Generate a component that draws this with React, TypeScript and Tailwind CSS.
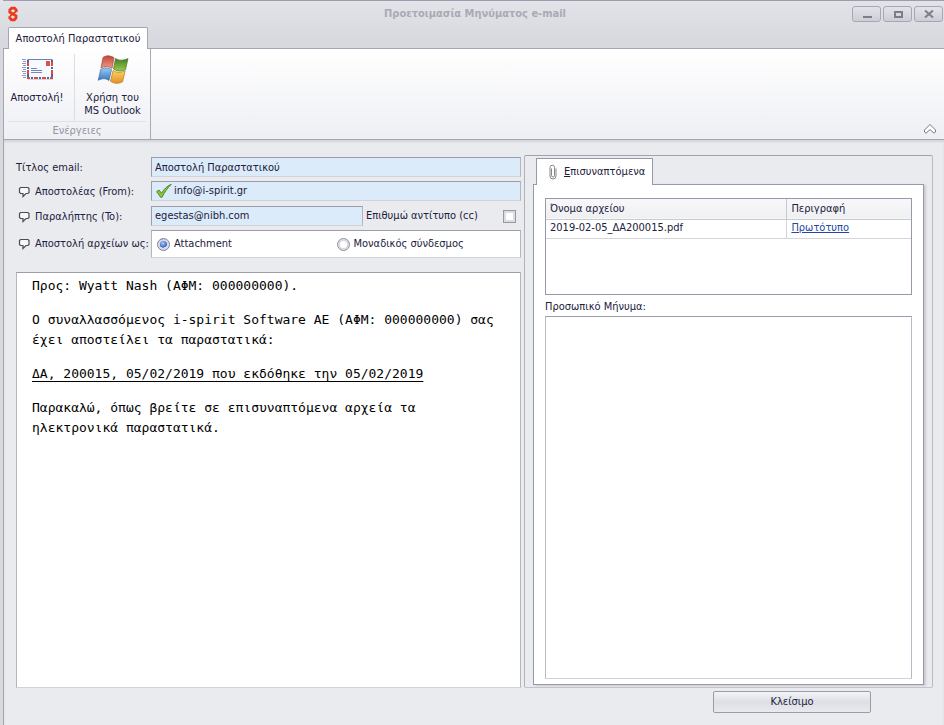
import { useState } from "react";
import type { ReactNode } from "react";

const ATTACHMENTS = [{ name: "2019-02-05_ΔΑ200015.pdf", description: "Πρωτότυπο" }];

const FIELD =
  "w-full min-w-0 border border-t-[#9c9cab] border-l-[#9c9cab] border-b-[#d2d3d9] border-r-[#b4b5bf] bg-[#dcebf9]";

function Logo() {
  return (
    <svg className="h-4 w-3" viewBox="0 0 12 16" fill="none" stroke="#ec3a1c">
      <path d="M9.2 6V4L7.6 2.2H4.6L2.8 4V6.2L9 9.8V12L7.4 13.8H4.4L2.8 12V10.2" strokeWidth="2.8" />
      <path d="M9 5.5L3 10" strokeWidth="1.6" />
    </svg>
  );
}

function EnvelopeIcon() {
  return (
    <svg className="h-6 w-8" viewBox="0 0 32 24">
      <path d="M6 22.5h25" stroke="#d3d6de" />
      <path d="M0 2.500h4M1 4.500h3M0 6.500h4M1 8.500h3M0 10.500h4M1 12.500h3M0 14.500h4M1 16.500h3M0 18.500h4M1 20.500h3" stroke="#8b9dc6" />
      <rect x="5" y="2" width="26" height="20" rx="1" fill="#f6f9ff" />
      <path d="M5.500 2.500h25" stroke="#6f82ae" />
      <path d="M5 21h26M30 3v18M6 3v18" stroke="#4467a8" strokeWidth="2" />
      <path d="M5 21h3M12 21h4M20 21h4M28 21h3M30 5v4M30 13v4M6 5v4M6 13v4" stroke="#dd4a3b" strokeWidth="2" />
      <path d="M8 21h1M11 21h1M16 21h1M19 21h1M24 21h1M27 21h1M30 9v1M30 12v1M6 9v1M6 12v1" stroke="#f6f9ff" strokeWidth="2" />
      <rect x="24" y="4" width="4" height="5" fill="#dd5044" />
      <path d="M9 11.500h6M9 13.500h11M9 15.500h11" stroke="#7387b8" />
    </svg>
  );
}

function WindowsIcon() {
  return (
    <svg className="h-8 w-8" viewBox="0 0 32 32">
      <defs>
        <linearGradient id="red" x1="0" y1="0" x2="0" y2="1">
          <stop offset="0" stopColor="#c4453c" />
          <stop offset="1" stopColor="#ee9c87" />
        </linearGradient>
        <linearGradient id="green" x1="0" y1="0" x2="0" y2="1">
          <stop offset="0" stopColor="#437c22" />
          <stop offset="1" stopColor="#9acb4c" />
        </linearGradient>
        <linearGradient id="blue" x1="0" y1="0" x2="0" y2="1">
          <stop offset="0" stopColor="#9acbf2" />
          <stop offset="1" stopColor="#3a76bc" />
        </linearGradient>
        <linearGradient id="yellow" x1="0" y1="0" x2="0" y2="1">
          <stop offset="0" stopColor="#f9d560" />
          <stop offset="1" stopColor="#e48f25" />
        </linearGradient>
      </defs>
      <path d="M6 3.500C9 1.200 13 1.400 17 3.700L15 14.300C11 12 7.500 12 4 14Z" fill="url(#red)" stroke="#a9443c" strokeWidth=".7" />
      <path d="M18.500 4.400C22 6.700 26 6.700 31 4.600L28.500 15.500C24.500 17.700 20.500 17.500 16.500 15Z" fill="url(#green)" stroke="#47732b" strokeWidth=".7" />
      <path d="M3.700 15.400C7.500 13.400 11 13.400 14.500 15.700L12 26.500C8.500 24 5 24.200 1.200 26.300Z" fill="url(#blue)" stroke="#3e6ea8" strokeWidth=".7" />
      <path d="M16 16.500C20 19 24 18.900 28.200 16.700L25.600 27.700C21.500 30 17.500 29.800 13.500 27.300Z" fill="url(#yellow)" stroke="#b77722" strokeWidth=".7" />
    </svg>
  );
}

function BalloonIcon() {
  return (
    <svg className="h-3 w-3 shrink-0" viewBox="0 0 12 12" fill="#f8f8fa" stroke="#4c4c54" strokeWidth="1.2">
      <path d="M2.500 1.500h7.500l1 1v4l-1 1H8L5 10.500V7.500H2.500l-1-1v-4z" />
    </svg>
  );
}

function CheckIcon() {
  return (
    <svg className="h-4 w-4 shrink-0" viewBox="0 0 16 16">
      <path d="M.7 8.600L3 7l2.600 3.200C8 6 11 3 15.300 1.300C11.500 5 8.500 9.300 6 14.300H4.600Z" fill="#8cc63c" stroke="#4b7d22" strokeWidth=".9" />
    </svg>
  );
}

function ClipIcon() {
  return (
    <svg className="h-4 w-2" viewBox="0 0 8 16" fill="none" stroke="#86868c">
      <path d="M2.500 4.500v7a1.500 1.500 0 0 0 3 0V3.500a2 2 0 0 0-4.500 0V12a3 3 0 0 0 6 0V4.500" />
    </svg>
  );
}

function WindowButton({ label, children }: { label: string; children: ReactNode }) {
  return (
    <button
      type="button"
      aria-label={label}
      className="flex h-4 w-[29px] items-center justify-center rounded-[3px] border border-[#a6a7b3] bg-linear-to-b from-[#e3e4e9] to-[#cdced5]"
    >
      <svg className="h-2 w-[10px]" viewBox="0 0 10 8" fill="none" stroke="#7c7d8c" strokeWidth="2">
        {children}
      </svg>
    </button>
  );
}

function TitleBar() {
  return (
    <header className="flex h-[27px] items-center justify-between border-t border-[#9d9dae] pr-[1px] pl-1">
      <div className="w-[91px]">
        <Logo />
      </div>
      <h1 className="font-bold text-[#a9aab4]">Προετοιμασία Μηνύματος e-mail</h1>
      <div className="flex gap-[2px]">
        <WindowButton label="Ελαχιστοποίηση">
          <path d="M1 7h9" />
        </WindowButton>
        <WindowButton label="Μεγιστοποίηση">
          <rect x="2" y="2" width="7" height="5" />
        </WindowButton>
        <WindowButton label="Έξοδος">
          <path d="M1 .5l8 7M9 .5l-8 7" />
        </WindowButton>
      </div>
    </header>
  );
}

function Ribbon() {
  return (
    <section className="flex h-[92px] justify-between border-t border-b border-l border-[#a4a5b0] bg-linear-to-b from-white to-[#eeeff4]">
      <div className="flex w-[147px] flex-col border-r border-[#a9aab3]">
        <div className="flex flex-1 pt-[5px]">
          <button type="button" className="flex w-[71px] flex-col items-center border-r border-[#dcdde2]">
            <span className="flex h-[37px] pt-[3px] pr-[2px]">
              <EnvelopeIcon />
            </span>
            <span className="pr-1 leading-[13px]">Αποστολή!</span>
          </button>
          <button type="button" className="flex flex-1 flex-col items-center">
            <span className="h-[37px]">
              <WindowsIcon />
            </span>
            <span className="leading-[13px]">
              Χρήση του
              <br />
              MS Outlook
            </span>
          </button>
        </div>
        <div className="mx-1 h-[18px] border-t border-[#e0e1e6] text-center leading-[18px] text-[#9394a0]">Ενέργειες</div>
      </div>
      <button type="button" aria-label="Σύμπτυξη κορδέλας" className="self-end pr-[7px] pb-1">
        <svg className="h-3 w-[14px]" viewBox="0 0 14 12" fill="#fff" stroke="#777883">
          <path d="M7 1.500L12.500 7v2L11 10.200L7 6.500L3 10.200L1.500 9V7Z" />
        </svg>
      </button>
    </section>
  );
}

function SendAsOption({ label, checked, onChange }: { label: string; checked: boolean; onChange: () => void }) {
  return (
    <label className="flex flex-1 items-center gap-1">
      <input
        type="radio"
        name="sendAs"
        checked={checked}
        onChange={onChange}
        className="size-[13px] appearance-none rounded-full border border-[#8e8f9b] bg-white shadow-[inset_0_0_0_2px_#d9dae0] checked:border-[#7c819b] checked:bg-[radial-gradient(circle_at_45%_40%,#b5cdf8_0%,#2f5dc4_45%,#fff_50%)]"
      />
      {label}
    </label>
  );
}

function EmailForm() {
  const [subject, setSubject] = useState("Αποστολή Παραστατικού");
  const [from, setFrom] = useState("info@i-spirit.gr");
  const [to, setTo] = useState("egestas@nibh.com");
  const [copy, setCopy] = useState(false);
  const [sendAs, setSendAs] = useState("attachment");

  return (
    <form className="grid grid-cols-[135px_1fr]">
      <label htmlFor="subject" className="flex h-5 items-center pt-[2px]">
        Τίτλος email:
      </label>
      <input id="subject" value={subject} onChange={(e) => setSubject(e.target.value)} className={`${FIELD} h-5 px-[3px]`} />

      <label htmlFor="from" className="mt-1 flex h-5 items-center gap-[5px] pt-[2px] pl-[2px]">
        <BalloonIcon />
        Αποστολέας (From):
      </label>
      <div className={`${FIELD} mt-1 flex h-5 items-center gap-[2px] pl-1`}>
        <CheckIcon />
        <input id="from" value={from} onChange={(e) => setFrom(e.target.value)} className="min-w-0 flex-1 outline-none" />
      </div>

      <label htmlFor="to" className="mt-[5px] flex h-5 items-center gap-[5px] pt-[2px] pl-[2px]">
        <BalloonIcon />
        Παραλήπτης (To):
      </label>
      <div className="mt-[5px] flex h-5">
        <input id="to" value={to} onChange={(e) => setTo(e.target.value)} className={`${FIELD} flex-1 px-[3px]`} />
        <label className="flex w-[158px] items-center justify-between pr-[5px] pl-[3px]">
          Επιθυμώ αντίτυπο (cc)
          <input
            type="checkbox"
            checked={copy}
            onChange={(e) => setCopy(e.target.checked)}
            className="size-[13px] appearance-none border border-[#9697a5] bg-white shadow-[inset_0_0_0_2px_#dcdde3] checked:bg-[#4a72c8]"
          />
        </label>
      </div>

      <span id="send-as" className="mt-1 flex h-7 items-center gap-[5px] pl-[2px] whitespace-nowrap">
        <BalloonIcon />
        Αποστολή αρχείων ως:
      </span>
      <div
        role="radiogroup"
        aria-labelledby="send-as"
        className="mt-1 flex h-7 border border-t-[#9c9cab] border-r-[#b4b5bf] border-b-[#d2d3d9] border-l-[#b4b5bf] bg-white pr-1 pl-[5px]"
      >
        <SendAsOption label="Attachment" checked={sendAs === "attachment"} onChange={() => setSendAs("attachment")} />
        <SendAsOption label="Μοναδικός σύνδεσμος" checked={sendAs === "link"} onChange={() => setSendAs("link")} />
      </div>
    </form>
  );
}

function MessagePreview() {
  return (
    <article className="mt-[14px] flex-1 space-y-[14px] border border-t-[#9c9cab] border-r-[#b4b5bf] border-b-[#d2d3d9] border-l-[#b4b5bf] bg-white py-[3px] pr-3 pl-[15px] font-['DejaVu_Sans_Mono','Liberation_Mono',monospace] text-[13px] leading-5 text-black">
      <p>Προς: Wyatt Nash (ΑΦΜ: 000000000).</p>
      <p>
        Ο συναλλασσόμενος i-spirit Software AE (ΑΦΜ: 000000000) σας
        <br />
        έχει αποστείλει τα παραστατικά:
      </p>
      <p className="underline decoration-1 underline-offset-3 [text-decoration-skip-ink:none]">
        ΔΑ, 200015, 05/02/2019 που εκδόθηκε την 05/02/2019
      </p>
      <p>
        Παρακαλώ, όπως βρείτε σε επισυναπτόμενα αρχεία τα
        <br />
        ηλεκτρονικά παραστατικά.
      </p>
    </article>
  );
}

function AttachmentsPanel() {
  const [note, setNote] = useState("");

  return (
    <section className="flex flex-col rounded-[2px] border border-t-[#a0a1ad] border-r-[#b9bac3] border-b-[#c3c4cb] border-l-[#b0b1bb] px-2 py-[2px]">
      <button
        type="button"
        role="tab"
        aria-selected="true"
        className="z-10 -mb-[1px] ml-[3px] flex h-[27px] w-[117px] items-center gap-[7px] border border-b-0 border-[#9798a8] bg-white pl-3"
      >
        <ClipIcon />
        <span>
          <u>Ε</u>πισυναπτόμενα
        </span>
      </button>
      <div className="flex flex-1 flex-col border border-[#9798a8] bg-white px-[11px] pt-[13px] pb-[5px] shadow-[2px_1px_2px_#c9cad1]">
        <div className="h-[97px] border border-[#9798a8]">
          <table className="w-full table-fixed border-collapse text-left">
            <thead>
              <tr className="h-5 border-b border-[#c9cad0] bg-linear-to-b from-[#f8f8fa] to-[#eff0f3]">
                <th className="w-[66%] border-r border-[#c9cad0] pl-1 font-normal">Όνομα αρχείου</th>
                <th className="pl-1 font-normal">Περιγραφή</th>
              </tr>
            </thead>
            <tbody>
              {ATTACHMENTS.map((file) => (
                <tr key={file.name} className="h-[19px] border-b border-[#d3d4d9]">
                  <td className="border-r border-[#d3d4d9] pl-1">{file.name}</td>
                  <td className="pl-1">
                    <a href="#original" className="text-[#2347a5] underline">
                      {file.description}
                    </a>
                  </td>
                </tr>
              ))}
            </tbody>
          </table>
        </div>
        <label htmlFor="note" className="mt-[5px] mb-[2px] leading-[14px]">
          Προσωπικό Μήνυμα:
        </label>
        <textarea
          id="note"
          value={note}
          onChange={(e) => setNote(e.target.value)}
          className="flex-1 resize-none border border-t-[#9c9cab] border-r-[#b9bac3] border-b-[#d2d3d9] border-l-[#b9bac3] p-1"
        />
      </div>
    </section>
  );
}

export default function App() {
  return (
    <div className="flex min-h-screen flex-col bg-linear-to-b from-[#e3e4e9] to-[#d8d9de] to-[40px] pl-[3px] font-['DejaVu_Sans_Condensed','Noto_Sans',sans-serif] text-[11px] text-[#20203c]">
      <TitleBar />
      <nav role="tablist" className="flex h-[21px] pl-[5px]">
        <button
          type="button"
          role="tab"
          aria-selected="true"
          className="z-10 h-[22px] w-[140px] rounded-t-[2px] border border-b-0 border-[#a4a5b0] bg-white pt-[2px]"
        >
          Αποστολή Παραστατικού
        </button>
      </nav>
      <Ribbon />
      <main className="flex flex-1 flex-col border-l border-[#a4a5ae] bg-[#eaebef] pr-[11px] pb-3 pl-3 shadow-[inset_0_2px_2px_#d4d5da]">
        <div className="grid flex-1 grid-cols-[505fr_409fr] gap-[3px] pt-[15px]">
          <div className="flex min-w-0 flex-col pt-[2px]">
            <EmailForm />
            <MessagePreview />
          </div>
          <AttachmentsPanel />
        </div>
        <button
          type="button"
          className="mt-[3px] mr-[62px] h-[22px] w-[158px] self-end rounded-[2px] border border-[#9b9caa] bg-linear-to-b from-[#f3f4f7] via-[#dedfe5] to-[#e9eaef]"
        >
          Κλείσιμο
        </button>
      </main>
    </div>
  );
}
